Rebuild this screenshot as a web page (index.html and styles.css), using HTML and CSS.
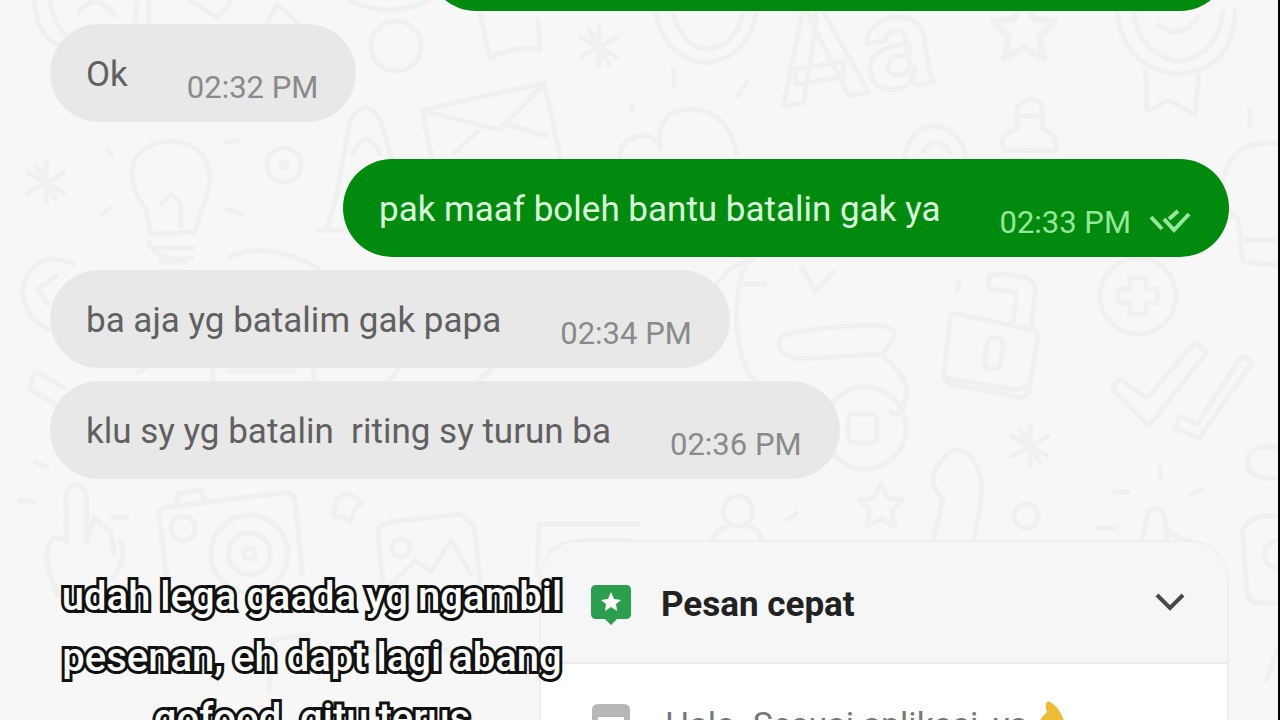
FILE: index.html
```html
<!DOCTYPE html>
<html lang="id">
<head>
<meta charset="utf-8">
<meta name="viewport" content="width=device-width, initial-scale=1">
<title>Chat</title>
<link rel="stylesheet" href="styles.css">
</head>
<body>
<main class="chat">
  <svg class="wallpaper" viewBox="0 0 1280 720" preserveAspectRatio="xMidYMid slice" aria-hidden="true">
    <defs>
      <path id="spark" d="M0-20V20M-18-10 18 10M-18 10 18-10M-10-17 10 17"/>
      <path id="star" d="M0-22 7-8 22-6 11 5 14 20 0 13-14 20-11 5-22-6-7-8Z"/>
    </defs>
    <!-- top row -->
    <path d="M35 0Q38 38 62 46M51 0Q55 25 66 34M150 0 149 25M138 0 136 24M80 12Q98-10 116 16M190 0 218 17 232 2M268 25 278 4 300 24"/>
    <path d="M350 0Q390 20 430 0"/>
    <circle cx="397" cy="46" r="25"/>
    <path d="M481 15 491 58Q515 45 541 50L539 20"/>
    <use href="#spark" x="600" y="47"/>
    <path d="M657 15Q668 60 708 63Q748 58 757 14M674 15Q686 48 708 49Q735 47 744 15M675 70V87M748 82 739 96M633 107V111"/>
    <text class="wallpaper-text" x="784" y="106" transform="rotate(-9 784 106)">Aa</text>
    <use href="#star" transform="translate(1025 30) scale(1.4)"/>
    <path d="M1118 12Q1126 70 1181 74 1235 68 1236 10M1134 12Q1143 58 1181 61 1218 55 1224 12M1160 25Q1180 42 1198 18M1147 72 1148 111 1170 100 1196 115 1200 72"/>
    <!-- second row -->
    <use href="#spark" x="47" y="183"/>
    <path d="M109 151 113 155M102 215 111 208M226 142 238 141M228 209 243 214M152 234 147 210Q132 190 133 170C136 133 205 130 210 172 213 196 201 205 196 232ZM155 248H194M162 262H187M162 204 172 194 182 204V226"/>
    <circle cx="285" cy="165" r="17"/><circle cx="285" cy="165" r="3"/>
    <path d="M327 229C340 200 344 150 352 119 365 98 381 106 388 143L396 170M353 154Q368 125 381 154M318 230H350M423 110 545 83 562 160 438 184ZM425 111 500 130 545 84M455 153 478 132M510 125 547 136"/>
    <path d="M620 160Q620 138 645 135 659 138 661 148 657 110 690 109 730 110 738 155"/>
    <path d="M905 158Q912 125 937 126 962 130 967 158M924 152Q937 132 951 152M1005 150Q998 134 1018 129V108Q1028 94 1042 103L1044 129Q1060 135 1057 151ZM1018 116H1044"/>
    <path d="M1280 144Q1236 137 1224 178 1221 205 1239 219L1244 262 1280 265M1251 110V125M1247 240H1280"/>
    <!-- middle row -->
    <path d="M75 264Q37 248 24 285 21 315 50 330M58 276 39 289 49 304M150 243Q160 264 193 258M230 257Q270 240 320 269M36 373 30 389 58 405M42 374 64 388"/>
    <path d="M138 373 148 366M214 380V370M230 371H295M315 370V380M400 370 390 380M492 370 480 380"/>
    <path d="M715 288Q731 262 755 260M747 268C733 286 733 355 755 380M742 284H765M803 267 816 292 834 272M782 337Q795 329 870 325 900 326 895 336L884 354 797 359Q774 350 782 337ZM884 356Q914 382 906 400 900 420 892 412"/>
    <circle cx="866" cy="428" r="41"/><rect x="849" y="414" width="29" height="29" rx="6"/>
    <path d="M961 280 958 290M958 314 1034 330Q1040 332 1038 342L1030 392Q1026 400 1015 396L951 384Q943 380 945 372L951 320Q952 312 958 314ZM948 378 1016 390 1032 386M994 338Q1006 338 1004 347L1001 366Q987 374 985 362L988 345Q990 338 994 338ZM990 289V276Q1000 272 1018 276 1038 278 1036 292L1032 328M990 289 1018 292 1014 324"/>
    <circle cx="1139" cy="296" r="38"/>
    <path d="M1131 278H1147V289H1158V303H1147V314H1131V303H1119V289H1131Z"/>
    <path d="M1113 388 1121 379 1148 398 1196 342 1208 352 1150 426ZM1175 428 1182 416 1198 424 1243 356 1254 362 1200 438Z"/>
    <!-- lower row -->
    <use href="#spark" x="1031" y="446"/>
    <use href="#star" x="882" y="506"/>
    <path d="M934 540 944 500C928 484 931 470 952 451 970 445 986 468 982 500L975 540"/>
    <circle cx="1027" cy="516" r="12"/>
    <circle cx="739" cy="511" r="15"/>
    <path d="M712 542Q719 527 730 526M748 526Q761 528 763 542M788 520 797 514M1161 467V477M1116 492H1129M1193 494 1204 489M1100 528H1117M1143 540 1149 512Q1158 503 1165 514L1168 540M1167 530 1182 539 1206 547M1280 447H1260Q1244 452 1250 470 1258 480 1280 478M1280 516H1262Q1240 523 1244 540L1248 590Q1248 603 1262 603H1280M1280 540Q1263 542 1266 560 1270 568 1280 568M1279 650 1267 680"/>
    <g transform="translate(4 -48) scale(1.1)">
      <path d="M30 464 39 468M15 499H28M50 585Q31 545 47 532L58 535 57 492Q67 476 76 492L76 536 83 514 98 528 101 548M100 514H112M107 536Q113 551 100 570"/>
      <path d="M142 514Q141 505 153 504L252 492Q265 489 266 503L272 565M150 580 143 520M157 503 160 492 180 489 184 499"/>
      <circle cx="164" cy="524" r="11"/><circle cx="224" cy="547" r="35"/><circle cx="224" cy="547" r="19"/><circle cx="224" cy="547" r="5"/>
    </g>
    <path d="M337 500 348 492 363 503 354 512 352 522 345 517 335 516ZM384 585 379 532Q381 524 391 522L462 514 475 526 482 585M392 584 417 560 432 572 452 540 472 574"/>
    <circle cx="402" cy="548" r="9"/>
    <path d="M538 575 540 524H640M550 550Q580 536 630 541M270 690 274 640 310 634M345 650H450"/>
  </svg>

  <section class="thread" aria-label="Percakapan">
    <div class="bubble sent previous"></div>
    <div class="bubble received first">
      <p class="message">Ok</p>
      <time class="time">02:32 PM</time>
    </div>
    <div class="bubble sent reply">
      <p class="message">pak maaf boleh bantu batalin gak ya</p>
      <time class="time">02:33 PM</time>
      <svg class="checks" viewBox="0 0 42 26" role="img" aria-label="Dibaca"><path d="M2 8 13 20M15 10 25 21 40 5M20 10 29 2"/></svg>
    </div>
    <div class="bubble received">
      <p class="message">ba aja yg batalim gak papa</p>
      <time class="time">02:34 PM</time>
    </div>
    <div class="bubble received">
      <p class="message">klu sy yg batalin&nbsp; riting sy turun ba</p>
      <time class="time">02:36 PM</time>
    </div>
  </section>

  <section class="quick">
    <button class="quick-header" type="button" aria-expanded="true">
      <svg class="quick-icon" viewBox="0 0 42 42" aria-hidden="true"><path fill="#2aa04e" d="M6 1H36Q41 1 41 6V30Q41 35 36 35H27L21 41 15 35H6Q1 35 1 30V6Q1 1 6 1Z"/><path fill="#fff" d="M21 8 24 15 31 16 26 20 27 27 21 23 15 27 16 20 11 16 18 15Z"/></svg>
      <span class="quick-title">Pesan cepat</span>
      <svg class="chevron" viewBox="0 0 30 18" aria-hidden="true"><path d="M2 2 15 15 28 2"/></svg>
    </button>
    <button class="quick-item" type="button">
      <svg class="quick-icon" viewBox="0 0 42 42" aria-hidden="true"><path fill="#b7b7b7" d="M8 1H34Q40 1 40 7V35H2V7Q2 1 8 1Z"/><path fill="#fff" d="M8 14H34V19H8Z"/></svg>
      <span class="quick-text">Halo. Sesuai aplikasi, ya</span>
      <svg class="hand" viewBox="0 0 40 48" aria-hidden="true"><path fill="#edbb35" d="M16 1Q12 4 15 12 8 18 4 29L6 44H32Q37 32 31 18 25 4 16 1Z"/></svg>
    </button>
  </section>

  <p class="caption">udah lega gaada yg ngambil pesenan, eh dapt lagi abang gofood, gitu terus</p>
</main>
</body>
</html>
```
FILE: styles.css
```css
* {
  box-sizing: border-box;
}

body {
  margin: 0;
  background: #f7f7f7;
  font-family: Roboto, "Liberation Sans", sans-serif;
}

p {
  margin: 0;
}

button {
  font: inherit;
  text-align: left;
  border: 0;
}

.chat {
  position: relative;
  display: flex;
  flex-direction: column;
  height: 100vh;
  overflow: hidden;
  padding: 0 49px 0 50px;
  border-right: 2px solid #000;
}

.wallpaper {
  position: absolute;
  inset: 0;
  width: 100%;
  height: 100%;
  fill: none;
  stroke: #eef1ef;
  stroke-width: 5;
  stroke-linecap: round;
  stroke-linejoin: round;
}

.wallpaper-text {
  font-size: 130px;
  font-weight: 700;
}

.thread {
  position: relative;
  flex: none;
  display: flex;
  flex-direction: column;
  gap: 13px;
}

.bubble {
  display: flex;
  align-items: center;
  min-height: 98px;
  padding: 4px 38px 0 36px;
  border-radius: 49px;
}

.received {
  align-self: flex-start;
  background: #e8e8e8;
  color: #606060;
}

.sent {
  align-self: flex-end;
  background: #008a0e;
  color: #dcffdc;
}

.previous {
  width: 68%;
  margin-top: -87px;
}

.reply {
  margin-top: 24px;
}

.message {
  font-size: 35px;
  line-height: 44px;
}

.time {
  margin: 26px 0 0 59px;
  font-size: 31px;
  line-height: 36px;
  color: #8a8a8a;
}

.sent .time {
  color: #96e59a;
}

.checks {
  width: 42px;
  height: 26px;
  margin: 24px 0 0 18px;
  fill: none;
  stroke: #96e59a;
  stroke-width: 4;
}

.quick {
  position: relative;
  flex: none;
  width: 690px;
  margin: 61px 0 0 auto;
  overflow: hidden;
  background: #fff;
  border: 2px solid #efefef;
  border-radius: 40px 40px 0 0;
}

.quick-header {
  display: flex;
  align-items: center;
  width: 100%;
  height: 122px;
  padding: 6px 42px 0 49px;
  background: #f6f6f6;
  border-bottom: 2px solid #ebebeb;
  color: #222;
}

.quick-icon {
  flex: none;
  width: 42px;
  height: 42px;
}

.quick-title {
  flex: 1;
  margin-left: 29px;
  font-size: 35px;
  font-weight: 700;
  line-height: 44px;
}

.chevron {
  width: 30px;
  height: 18px;
  margin-bottom: 6px;
  fill: none;
  stroke: #484848;
  stroke-width: 4;
}

.quick-item {
  display: flex;
  align-items: center;
  width: 100%;
  padding: 36px 42px 36px 49px;
  background: #fff;
  color: #777;
}

.quick-text {
  margin: 0 4px 0 33px;
  font-size: 34px;
  line-height: 44px;
}

.hand {
  width: 40px;
  height: 48px;
}

.caption {
  position: absolute;
  top: 566px;
  left: 44px;
  width: 536px;
  font-size: 40px;
  font-weight: 500;
  line-height: 61px;
  text-align: center;
  color: #fff;
  -webkit-text-stroke: 6px #111;
  paint-order: stroke fill;
}
```
